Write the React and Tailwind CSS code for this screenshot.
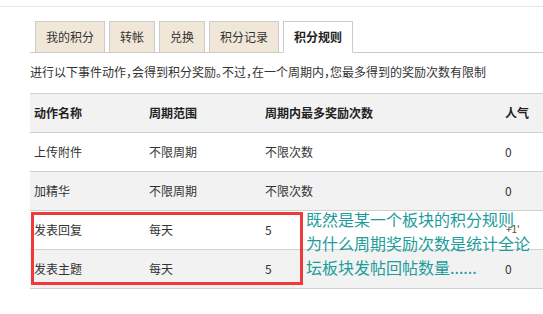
import React from 'react';

const tabs = ['我的积分', '转帐', '兑换', '积分记录', '积分规则'];

const rows = [
  ['上传附件', '不限周期', '不限次数', '0'],
  ['加精华', '不限周期', '不限次数', '0'],
  ['发表回复', '每天', '5', ''],
  ['发表主题', '每天', '5', '0'],
];

const font = { fontFamily: '"Noto Sans CJK SC", "Liberation Sans", sans-serif' };

export default function App() {
  return (
    <div className="relative w-[543px] h-[314px] overflow-hidden bg-white text-[#333]" style={font}>
      <div className="h-[7px] border-b border-[#e6e6e6]" />

      <div className="pl-[30px] pt-[14px]">
        {/* Tabs */}
        <ul className="flex items-end gap-[4px] pl-[5px] border-b border-[#cccccc] h-[32px]">
          {tabs.map((tab, i) => {
            const active = i === tabs.length - 1;
            return (
              <li
                key={tab}
                className={`-mb-px h-[32px] px-[10px] flex items-center border border-[#cccccc] text-[12px] leading-none ${
                  active ? 'bg-white border-b-white font-bold text-[#222]' : 'bg-[#f1e7d9] text-[#333]'
                }`}
              >
                {tab}
              </li>
            );
          })}
        </ul>

        {/* Description */}
        <p className="mt-[9px] h-[20px] text-[12px] leading-[20px] text-[#333] whitespace-nowrap [font-feature-settings:'halt']">
          进行以下事件动作，会得到积分奖励。不过，在一个周期内，您最多得到的奖励次数有限制
        </p>

        {/* Table */}
        <div className="mt-[11px] w-[560px] border-t border-[#d0d0d0] text-[12px]">
          <div className="grid grid-cols-[115px_116px_242px_1fr] h-[39px] items-center bg-[#f2f2f2] border-b border-[#d0d0d0] font-bold text-[#222]">
            <span className="pl-[4px]">动作名称</span>
            <span className="pl-[4px]">周期范围</span>
            <span className="pl-[4px]">周期内最多奖励次数</span>
            <span className="pl-[2px]">人气</span>
          </div>
          {rows.map((r, i) => (
            <div
              key={r[0]}
              className={`grid grid-cols-[115px_116px_242px_1fr] h-[39px] items-center border-b border-[#d0d0d0] ${
                i % 2 === 1 ? 'bg-[#f2f2f2]' : 'bg-white'
              }`}
            >
              <span className="pl-[4px]">{r[0]}</span>
              <span className="pl-[4px]">{r[1]}</span>
              <span className="pl-[4px]">{r[2]}</span>
              <span className="pl-[2px]">{r[3]}</span>
            </div>
          ))}
        </div>
      </div>

      {/* Annotation */}
      <div className="absolute left-[31px] top-[212px] w-[272px] h-[73px] border-[3px] border-[#f03a3a]" />
      <div className="absolute left-[306px] top-[207px] text-[16px] leading-[24px] text-[#1d9c9c] whitespace-nowrap">
        <div>既然是某一个板块的积分规则</div>
        <div>为什么周期奖励次数是统计全论</div>
        <div>坛板块发帖回帖数量......</div>
      </div>
      <span className="absolute left-[506px] top-[224px] text-[10px] leading-none text-[#6b4a1a]">+1'</span>
    </div>
  );
}
